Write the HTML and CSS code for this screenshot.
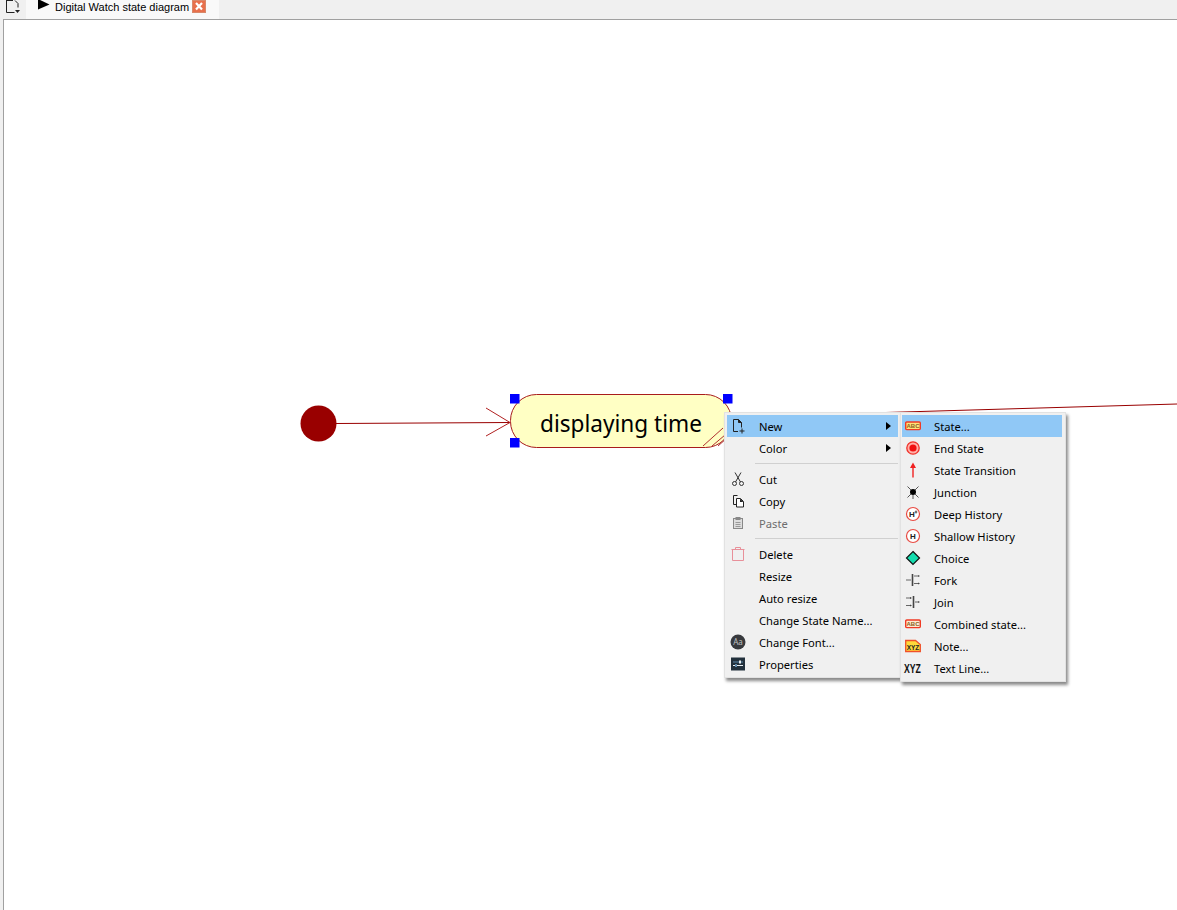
FILE: index.html
```html
<!DOCTYPE html>
<html lang="en">
<head>
    <meta charset="UTF-8">
    <title>Digital Watch state diagram</title>
    <link rel="stylesheet" href="styles.css">
</head>
<body>
    <div id="tabbar">
        <span class="tool-icon">
            <svg width="16" height="14" viewBox="0 0 16 14">
                <path d="M1.500 0v12.500h8M1.500 .5h6.500M10 .5l3 3v4" fill="none" stroke="#222" stroke-width="1"/>
                <path d="M10 10h5l-2.500 3z" fill="#222"/>
            </svg>
        </span>
        <div id="tab">
            <svg class="tab-play" width="12" height="11" viewBox="0 0 12 11"><path d="M0 0l11.500 5.500-11.500 5z" fill="#000"/></svg>
            <span class="tab-title">Digital Watch state diagram</span>
            <span class="tab-close">
                <svg width="14" height="13" viewBox="0 0 14 13"><path d="M4 3l6 6.500M10 3l-6 6.500" stroke="#fff" stroke-width="2.200"/></svg>
            </span>
        </div>
    </div>

    <div id="canvas">
        <svg class="diagram" width="1173" height="890" viewBox="4 20 1173 890">
            <circle cx="318.500" cy="423.500" r="18" fill="#990000"/>
            <path d="M336 423.500L510 422.500" stroke="#990000" fill="none"/>
            <path d="M486 408L510 422.500L486 436" stroke="#b02020" fill="none"/>
            <rect x="510.500" y="394.500" width="221" height="53" rx="26" fill="#ffffc4" stroke="#a81c1c"/>
            <path d="M703 446L723 428M712 446L725 435M718 446L727 438" stroke="#b03030" fill="none"/>
            <text class="state-name" x="540" y="432" textLength="162" lengthAdjust="spacingAndGlyphs">displaying time</text>
            <path d="M732 417L1177 404" stroke="#990000" fill="none"/>
            <rect x="510" y="394" width="9.500" height="9.500" fill="#0000ff"/>
            <rect x="723" y="394" width="9.500" height="9.500" fill="#0000ff"/>
            <rect x="510" y="438" width="9.500" height="9.500" fill="#0000ff"/>
        </svg>
    </div>

    <div id="menu" class="menu">
        <div class="item active">
            <span class="ico"><svg width="16" height="16" viewBox="0 0 16 16"><path d="M8 13.500H3.500V1.500h5l3 3v5M8.500 1.500v3h3" fill="none" stroke="#222"/><path d="M8.500 1.500l3 3h-3z" fill="#222"/><path d="M12 10.500v5M9.500 13h5" stroke="#222"/></svg></span>
            <span class="label">New</span><i class="arrow"></i>
        </div>
        <div class="item">
            <span class="ico"></span>
            <span class="label">Color</span><i class="arrow"></i>
        </div>
        <div class="sep"></div>
        <div class="item">
            <span class="ico"><svg width="16" height="16" viewBox="0 0 16 16"><path d="M5 1.500L10.500 11M11 1.500L5.500 11" stroke="#333" fill="none"/><circle cx="4.500" cy="12.500" r="2" fill="none" stroke="#333"/><circle cx="11.500" cy="12.500" r="2" fill="none" stroke="#333"/></svg></span>
            <span class="label">Cut</span>
        </div>
        <div class="item">
            <span class="ico"><svg width="16" height="16" viewBox="0 0 16 16"><path d="M6 11.500H3.500V2.500h4" fill="none" stroke="#222"/><path d="M6.500 5.500h4l3 3v5.500h-7z" fill="#fff" stroke="#222"/><path d="M10 5.500l3.500 3.500H10z" fill="#222"/></svg></span>
            <span class="label">Copy</span>
        </div>
        <div class="item disabled">
            <span class="ico"><svg width="16" height="16" viewBox="0 0 16 16"><rect x="3.500" y="3.500" width="9" height="10" fill="#ddd" stroke="#888"/><rect x="5.500" y="2" width="5" height="3" fill="#888"/><path d="M5.500 7.500h5M5.500 9.500h5M5.500 11.500h5" stroke="#999"/></svg></span>
            <span class="label">Paste</span>
        </div>
        <div class="sep"></div>
        <div class="item">
            <span class="ico"><svg width="16" height="16" viewBox="0 0 16 16"><path d="M1.500 3.500h13M5.500 3.500V1.500h5v2M2.500 3.500v11h11v-11" fill="none" stroke="#e8909a"/></svg></span>
            <span class="label">Delete</span>
        </div>
        <div class="item">
            <span class="ico"></span>
            <span class="label">Resize</span>
        </div>
        <div class="item">
            <span class="ico"></span>
            <span class="label">Auto resize</span>
        </div>
        <div class="item">
            <span class="ico"></span>
            <span class="label">Change State Name...</span>
        </div>
        <div class="item">
            <span class="ico"><svg width="16" height="16" viewBox="0 0 16 16"><circle cx="8" cy="8" r="7.500" fill="#37393d"/><text class="ico-aa" x="8" y="11" text-anchor="middle">Aa</text></svg></span>
            <span class="label">Change Font...</span>
        </div>
        <div class="item">
            <span class="ico"><svg width="16" height="16" viewBox="0 0 16 16"><rect x="1" y="1.500" width="14" height="13" fill="#22303c"/><path d="M3 9.500h10" stroke="#e8eef2"/><path d="M3 6h10" stroke="#5d87a8"/><rect x="9" y="4.500" width="2" height="3" fill="#e8eef2"/><rect x="5" y="8" width="2" height="3" fill="#5d87a8"/></svg></span>
            <span class="label">Properties</span>
        </div>
    </div>

    <div id="submenu" class="menu">
        <div class="item active">
            <span class="ico"><svg width="16" height="16" viewBox="0 0 16 16"><rect x="0.700" y="4" width="14.600" height="7.600" rx="1" fill="#ffe27a" stroke="#f03a24" stroke-width="1.400"/><text class="ico-abc" x="8" y="10" text-anchor="middle">ABC</text></svg></span>
            <span class="label">State...</span>
        </div>
        <div class="item">
            <span class="ico"><svg width="16" height="16" viewBox="0 0 16 16"><circle cx="8" cy="8" r="6.200" fill="#ffb0a8" stroke="#f03028" stroke-width="1.300"/><circle cx="8" cy="8" r="3.600" fill="#f01010"/></svg></span>
            <span class="label">End State</span>
        </div>
        <div class="item">
            <span class="ico"><svg width="16" height="16" viewBox="0 0 16 16"><path d="M8 15.500V3" stroke="#f02020" stroke-width="1.400"/><path d="M8 0.500L11 6H5z" fill="#f02020"/></svg></span>
            <span class="label">State Transition</span>
        </div>
        <div class="item">
            <span class="ico"><svg width="16" height="16" viewBox="0 0 16 16"><circle cx="8" cy="8" r="3" fill="#000"/><path d="M2.500 2.500L6 6M13.500 2.500L10 6M2.500 13.500L6 10M13.500 13.500L10 10M8 11v4" stroke="#555" fill="none"/></svg></span>
            <span class="label">Junction</span>
        </div>
        <div class="item">
            <span class="ico"><svg width="16" height="16" viewBox="0 0 16 16"><circle cx="8" cy="8" r="6.500" fill="#fff" stroke="#e84a42" stroke-width="1.200"/><text class="ico-h" x="7" y="11" text-anchor="middle">H</text><path d="M11 4.500v3M9.700 6h2.600" stroke="#222" stroke-width="0.800"/></svg></span>
            <span class="label">Deep History</span>
        </div>
        <div class="item">
            <span class="ico"><svg width="16" height="16" viewBox="0 0 16 16"><circle cx="8" cy="8" r="6.500" fill="#fff" stroke="#e84a42" stroke-width="1.200"/><text class="ico-h" x="8" y="11" text-anchor="middle">H</text></svg></span>
            <span class="label">Shallow History</span>
        </div>
        <div class="item">
            <span class="ico"><svg width="16" height="16" viewBox="0 0 16 16"><path d="M8 1.500L14.500 8L8 14.500L1.500 8z" fill="#14dcae" stroke="#111" stroke-width="1.200"/></svg></span>
            <span class="label">Choice</span>
        </div>
        <div class="item">
            <span class="ico"><svg width="16" height="16" viewBox="0 0 16 16"><path d="M7.500 2v12" stroke="#444" stroke-width="1.600"/><path d="M1 8h5M9 4h4M9 11.500h4" stroke="#666"/><path d="M13 3l2 1-2 1zM13 10.500l2 1-2 1z" fill="#444"/></svg></span>
            <span class="label">Fork</span>
        </div>
        <div class="item">
            <span class="ico"><svg width="16" height="16" viewBox="0 0 16 16"><path d="M8.500 2v12" stroke="#444" stroke-width="1.600"/><path d="M1 4h5M1 11.500h5M10 8h3" stroke="#666"/><path d="M13 7l2 1-2 1zM5 3l2 1-2 1zM5 10.500l2 1-2 1z" fill="#444"/></svg></span>
            <span class="label">Join</span>
        </div>
        <div class="item">
            <span class="ico"><svg width="16" height="16" viewBox="0 0 16 16"><rect x="0.700" y="4" width="14.600" height="7.600" rx="1" fill="#ffe9d0" stroke="#f03a24" stroke-width="1.400"/><text class="ico-abc" x="8" y="10" text-anchor="middle">ABC</text></svg></span>
            <span class="label">Combined state...</span>
        </div>
        <div class="item">
            <span class="ico"><svg width="16" height="16" viewBox="0 0 16 16"><path d="M0.700 2.500h9.800l4.800 4v7H.7z" fill="#ffd93a" stroke="#f0502a" stroke-width="1.300"/><text class="ico-xyz" x="8" y="12" text-anchor="middle">XYZ</text></svg></span>
            <span class="label">Note...</span>
        </div>
        <div class="item">
            <span class="ico"><svg class="ico-wide" width="18" height="16" viewBox="0 0 18 16"><text class="ico-line" y="13" transform="scale(.67 1)">XYZ</text></svg></span>
            <span class="label">Text Line...</span>
        </div>
    </div>
</body>
</html>
```

FILE: styles.css
```css
* {
    margin: 0;
    padding: 0;
    box-sizing: border-box;
}
html, body {
    height: 100%;
    overflow: hidden;
}
body {
    display: flex;
    flex-direction: column;
    background: #f0f0f0;
    font-family: "Noto Sans", "Open Sans", sans-serif;
    font-size: 11.2px;
    color: #000;
}

#tabbar {
    display: flex;
    height: 19px;
    flex: none;
    padding-left: 5px;
    background: #f0f0f0;
}
.tool-icon {
    display: block;
    width: 21px;
    height: 14px;
}
.tool-icon svg {
    display: block;
}
#tab {
    display: flex;
    align-items: flex-start;
    width: 193px;
    padding-left: 12px;
    background: #f9f9f9;
}
.tab-play {
    flex: none;
    margin-top: -1px;
}
.tab-title {
    margin-left: 5px;
    font-family: "Liberation Sans", sans-serif;
    font-size: 11px;
    line-height: 14px;
    white-space: nowrap;
}
.tab-close {
    display: block;
    flex: none;
    width: 14px;
    height: 13px;
    margin-left: 3px;
    background: #e8704c;
    border: 1px solid #d8886a;
}
.tab-close svg {
    display: block;
    margin: -1px;
}

#canvas {
    flex: 1;
    margin-left: 3px;
    background: #fff;
    border-left: 1px solid #a0a0a0;
    border-top: 1px solid #a0a0a0;
    overflow: hidden;
}
.diagram {
    display: block;
}
.state-name {
    font-family: "Noto Sans", sans-serif;
    font-size: 24px;
    fill: #000;
}

.menu {
    position: absolute;
    top: 412px;
    background: #f0f0f0;
    border: 1px solid #e2e2e2;
    padding: 2px;
    box-shadow: 2px 3px 3px #8a8a8a;
}
#menu {
    left: 724px;
    width: 177px;
    height: 266px;
}
#submenu {
    left: 900px;
    width: 166px;
    height: 270px;
    padding: 2px 3px 2px 1px;
}
.item {
    display: flex;
    align-items: center;
    height: 22px;
}
.item.active {
    background: #90c8f6;
}
.item.disabled .label {
    color: #6d6d6d;
}
.ico {
    display: flex;
    align-items: center;
    flex: none;
    width: 25px;
    height: 22px;
    padding-left: 3px;
    background: #f0f0f0;
}
.active .ico {
    background: #90c8f6;
}
.ico svg {
    display: block;
    flex: none;
}
.ico .ico-wide {
    margin-left: -1px;
    overflow: visible;
}
.label {
    flex: 1;
    padding-left: 7px;
    white-space: nowrap;
}
.arrow {
    flex: none;
    width: 0;
    height: 0;
    margin-right: 7px;
    border-left: 5px solid #000;
    border-top: 4px solid transparent;
    border-bottom: 4px solid transparent;
}
.sep {
    height: 1px;
    margin: 4px 0 4px 28px;
    background: #d0d0d0;
}
.ico-aa {
    font-size: 8px;
    fill: #c0c0c0;
}
.ico-abc {
    font-family: "Liberation Sans", sans-serif;
    font-size: 6px;
    font-weight: bold;
    fill: #8a6020;
}
.ico-h {
    font-family: "Liberation Sans", sans-serif;
    font-size: 8px;
    font-weight: bold;
    fill: #222;
}
.ico-xyz {
    font-family: "Liberation Sans", sans-serif;
    font-size: 6.500px;
    font-weight: bold;
    fill: #222;
}
.ico-line {
    font-family: "Liberation Sans", sans-serif;
    font-size: 13px;
    font-weight: bold;
    fill: #111;
}
```
